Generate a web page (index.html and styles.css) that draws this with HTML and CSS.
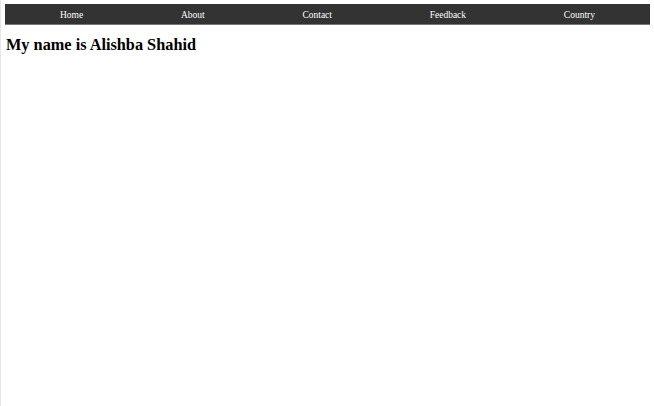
FILE: index.html
```html
<!DOCTYPE html>
<html>
<head>
<meta charset="utf-8">
<title>Alishba Shahid</title>
<link rel="stylesheet" href="styles.css">
</head>
<body>
<nav class="topnav">
  <a class="topnav-link" href="#">Home</a>
  <a class="topnav-link" href="#">About</a>
  <a class="topnav-link" href="#">Contact</a>
  <a class="topnav-link" href="#">Feedback</a>
  <a class="topnav-link" href="#">Country</a>
</nav>
<h2 class="title">My name is Alishba Shahid</h2>
</body>
</html>
```
FILE: styles.css
```css
html {
  height: 100%;
  border-left: 1px solid #e6e6e6;
  box-sizing: border-box;
}
body {
  margin: 0;
  padding: 4px 4px 0 4px;
  font-family: "Liberation Serif", "Times New Roman", serif;
  background: #fff;
  color: #000;
}
.topnav {
  display: flex;
  justify-content: space-between;
  align-items: center;
  box-sizing: border-box;
  height: 21px;
  padding: 1px 55px 0;
  background: #333;
  border-bottom: 1px solid #777;
}
.topnav-link {
  color: #fff;
  text-decoration: none;
  font-size: 9.5px;
}
.title {
  margin: 10px 0 0 1px;
  font-size: 16.3px;
  font-weight: bold;
}
```
